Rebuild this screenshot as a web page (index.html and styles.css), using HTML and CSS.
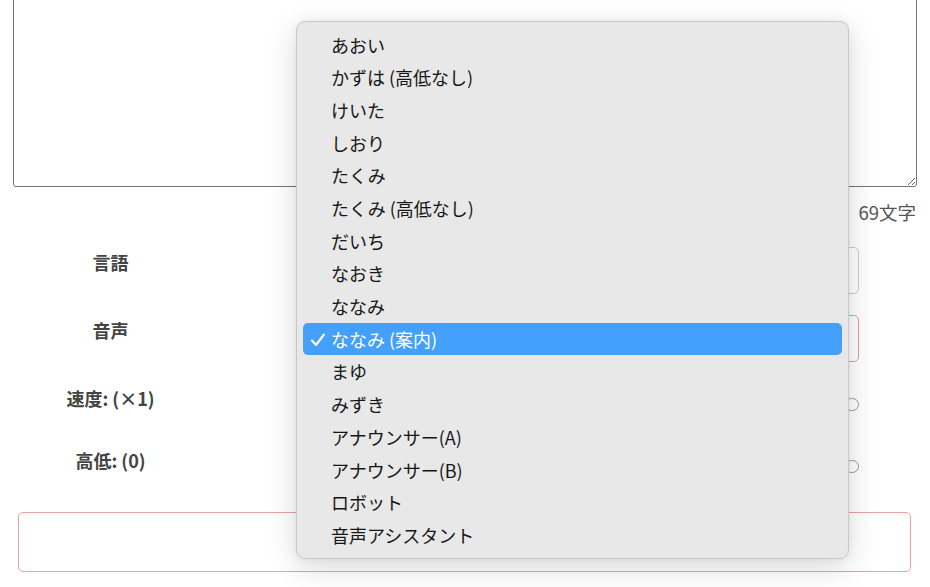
FILE: index.html
```html
<!DOCTYPE html>
<html lang="ja">
<head>
<meta charset="utf-8">
<title>音声設定</title>
<link rel="stylesheet" href="styles.css">
</head>
<body>
<div class="page">
  <textarea class="text-input"></textarea>
  <div class="count">69文字</div>
  <div class="form">
    <div class="row row-select">
      <div class="label">言語</div>
      <div class="select"></div>
    </div>
    <div class="row row-select">
      <div class="label">音声</div>
      <div class="select select-error"></div>
    </div>
    <div class="row row-slider">
      <div class="label">速度: (×1)</div>
      <div class="slider"><div class="track"></div><div class="thumb"></div></div>
    </div>
    <div class="row row-slider">
      <div class="label">高低: (0)</div>
      <div class="slider"><div class="track"></div><div class="thumb"></div></div>
    </div>
  </div>
  <div class="action-box"></div>
</div>

<ul class="menu">
  <li class="item">あおい</li>
  <li class="item">かずは (高低なし)</li>
  <li class="item">けいた</li>
  <li class="item">しおり</li>
  <li class="item">たくみ</li>
  <li class="item">たくみ (高低なし)</li>
  <li class="item">だいち</li>
  <li class="item">なおき</li>
  <li class="item">ななみ</li>
  <li class="item selected"><svg class="check" width="16" height="14" viewBox="0 0 16 14"><polyline points="2,7.5 6,12 14,1.5" fill="none" stroke="#fff" stroke-width="2.1" stroke-linecap="round" stroke-linejoin="round"/></svg>ななみ (案内)</li>
  <li class="item">まゆ</li>
  <li class="item">みずき</li>
  <li class="item">アナウンサー(A)</li>
  <li class="item">アナウンサー(B)</li>
  <li class="item">ロボット</li>
  <li class="item">音声アシスタント</li>
</ul>
</body>
</html>
```
FILE: styles.css
```css
html, body {
  margin: 0;
  padding: 0;
  background: #ffffff;
  overflow: hidden;
}
body {
  font-family: "Noto Sans CJK JP", "Noto Sans", sans-serif;
  color: #333;
  width: 930px;
  height: 587px;
  position: relative;
}
.page {
  padding: 0 13px;
  display: flex;
  flex-direction: column;
}
.text-input {
  display: block;
  box-sizing: border-box;
  width: 904px;
  height: 207px;
  margin: -20px 0 0 0;
  border: 1px solid #767676;
  border-radius: 3px;
  background: #fff;
  resize: vertical;
}
.count {
  margin-top: 12px;
  text-align: right;
  font-size: 18.5px;
  line-height: 26px;
  color: #555;
  padding-right: 1px;
}
.form {
  margin-top: 22px;
  display: flex;
  flex-direction: column;
}
.row {
  display: grid;
  grid-template-columns: 195px 1fr;
  padding-right: 58px;
}
.row-select {
  height: 47px;
  margin-bottom: 21px;
}
.row-slider {
  height: 30px;
  margin-bottom: 32px;
}
.label {
  text-align: center;
  font-weight: 700;
  font-size: 18px;
  line-height: 24px;
  color: #444;
  padding-top: 3px;
}
.row-slider .label { padding-top: 3px; }
.select {
  box-sizing: border-box;
  margin-left: 100px;
  border: 1px solid #cccccc;
  border-radius: 5px;
  background: #fff;
}
.select-error { border-color: #e29a9a; }
.slider {
  margin-left: 100px;
  display: flex;
  align-items: center;
  padding-top: 9px;
  height: 24px;
}
.track {
  flex: 1;
  height: 4px;
  background: #dddddd;
  border-radius: 2px;
}
.thumb {
  box-sizing: border-box;
  width: 14px;
  height: 13px;
  border: 1px solid #9a9a9a;
  border-radius: 7px;
  background: #fff;
  margin-left: -6px;
}
.action-box {
  box-sizing: border-box;
  margin: 5px 6px 0 5px;
  height: 60px;
  border: 1px solid #e6a3a3;
  border-radius: 5px;
}
.menu {
  position: absolute;
  left: 296px;
  top: 21px;
  width: 553px;
  height: 538px;
  box-sizing: border-box;
  margin: 0;
  padding: 6.6px 6px;
  list-style: none;
  background: #e8e8e8;
  border: 1px solid #c8c8c8;
  border-radius: 9px;
  box-shadow: 0 8px 30px rgba(0, 0, 0, 0.16), 0 0 6px rgba(0, 0, 0, 0.05);
}
.item {
  position: relative;
  height: 32.7px;
  line-height: 32.7px;
  padding-left: 28px;
  font-size: 18px;
  color: #161616;
  border-radius: 5px;
  white-space: nowrap;
}
.item.selected {
  background: #45a0fc;
  color: #fff;
}
.check {
  position: absolute;
  left: 7px;
  top: 10px;
}
```
